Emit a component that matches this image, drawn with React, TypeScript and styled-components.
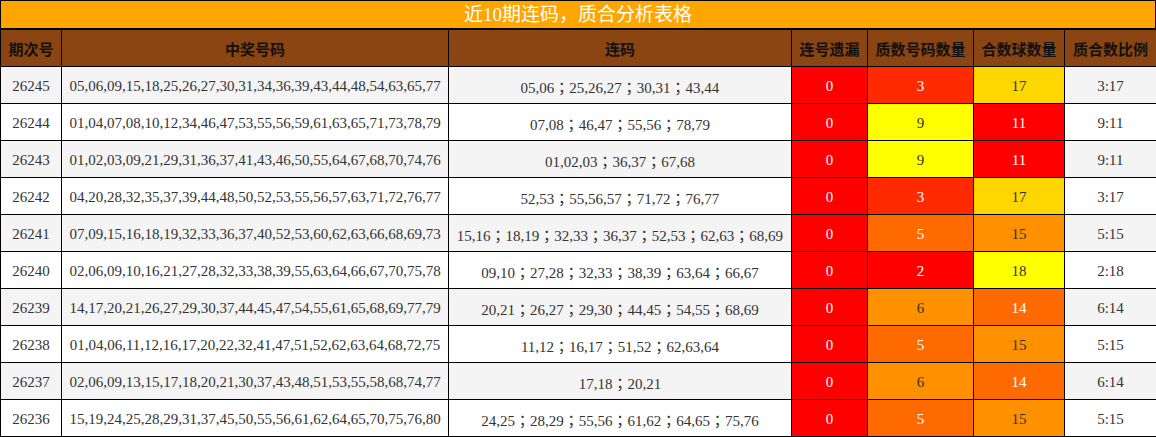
import React from "react"
import styled, { createGlobalStyle } from "styled-components"

const GlobalStyle = createGlobalStyle`
  html, body {
    margin: 0;
    padding: 0;
    background: #fff;
  }
`

const Wrap = styled.div`
  width: 1156px;
  font-family: "Liberation Serif", "Noto Sans CJK SC", serif;
`

const Title = styled.div`
  box-sizing: border-box;
  height: 29px;
  border: 1px solid #000;
  background: #ffa500;
  color: #fff;
  font-size: 19px;
  line-height: 27px;
  text-align: center;
`

const Table = styled.table`
  width: 1156px;
  border-collapse: collapse;
  table-layout: fixed;
`

const Col = styled.col<{ $w: number }>`
  width: ${(p) => p.$w}px;
`

const HeadCell = styled.th`
  height: 36px;
  padding: 0;
  border: 1px solid #000;
  background: #8b4513;
  color: #111;
  font-family: "Noto Sans CJK SC", sans-serif;
  font-size: 15px;
  font-weight: 700;
  text-align: center;
`

const Row = styled.tr<{ $alt: boolean }>`
  background: ${(p) => (p.$alt ? "#f4f4f4" : "#fff")};
`

const Cell = styled.td<{ $bg?: string; $light?: boolean }>`
  height: 34px;
  padding: 2px 0 0;
  border: 1px solid #000;
  text-align: center;
  font-size: 15px;
  color: ${(p) => (p.$light ? "#fff" : "#333")};
  background: ${(p) => p.$bg ?? "transparent"};
  white-space: nowrap;
`

// fullwidth semicolons sit centred in the TC face, as in the source page
const RunCell = styled(Cell)`
  font-family: "Liberation Serif", "Noto Sans CJK TC", serif;
`

const RED = "#ff0000"
const RED_ORANGE = "#ff2a00"
const DARK_ORANGE = "#ff6a00"
const ORANGE = "#ff9000"
const GOLD = "#ffd700"
const YELLOW = "#ffff00"

const tone: Record<number, [string, boolean]> = {
  0: [RED, true],
  2: [RED, true],
  3: [RED_ORANGE, true],
  5: [DARK_ORANGE, true],
  6: [ORANGE, false],
  9: [YELLOW, false],
  11: [RED, true],
  14: [DARK_ORANGE, true],
  15: [ORANGE, false],
  17: [GOLD, false],
  18: [YELLOW, false],
}

const rows = [
  ["26245", "05,06,09,15,18,25,26,27,30,31,34,36,39,43,44,48,54,63,65,77", "05,06；25,26,27；30,31；43,44", 0, 3, 17],
  ["26244", "01,04,07,08,10,12,34,46,47,53,55,56,59,61,63,65,71,73,78,79", "07,08；46,47；55,56；78,79", 0, 9, 11],
  ["26243", "01,02,03,09,21,29,31,36,37,41,43,46,50,55,64,67,68,70,74,76", "01,02,03；36,37；67,68", 0, 9, 11],
  ["26242", "04,20,28,32,35,37,39,44,48,50,52,53,55,56,57,63,71,72,76,77", "52,53；55,56,57；71,72；76,77", 0, 3, 17],
  ["26241", "07,09,15,16,18,19,32,33,36,37,40,52,53,60,62,63,66,68,69,73", "15,16；18,19；32,33；36,37；52,53；62,63；68,69", 0, 5, 15],
  ["26240", "02,06,09,10,16,21,27,28,32,33,38,39,55,63,64,66,67,70,75,78", "09,10；27,28；32,33；38,39；63,64；66,67", 0, 2, 18],
  ["26239", "14,17,20,21,26,27,29,30,37,44,45,47,54,55,61,65,68,69,77,79", "20,21；26,27；29,30；44,45；54,55；68,69", 0, 6, 14],
  ["26238", "01,04,06,11,12,16,17,20,22,32,41,47,51,52,62,63,64,68,72,75", "11,12；16,17；51,52；62,63,64", 0, 5, 15],
  ["26237", "02,06,09,13,15,17,18,20,21,30,37,43,48,51,53,55,58,68,74,77", "17,18；20,21", 0, 6, 14],
  ["26236", "15,19,24,25,28,29,31,37,45,50,55,56,61,62,64,65,70,75,76,80", "24,25；28,29；55,56；61,62；64,65；75,76", 0, 5, 15],
] as const

const widths = [61, 387, 343, 76, 106, 91, 92]
const heads = ["期次号", "中奖号码", "连码", "连号遗漏", "质数号码数量", "合数球数量", "质合数比例"]

const Scored = ({ n }: { n: number }) => {
  const [bg, light] = tone[n]
  return (
    <Cell $bg={bg} $light={light}>
      {n}
    </Cell>
  )
}

export default function App() {
  return (
    <Wrap>
      <GlobalStyle />
      <Title>近10期连码，质合分析表格</Title>
      <Table>
        <colgroup>
          {widths.map((w, i) => (
            <Col key={i} $w={w} />
          ))}
        </colgroup>
        <thead>
          <tr>
            {heads.map((h) => (
              <HeadCell key={h}>{h}</HeadCell>
            ))}
          </tr>
        </thead>
        <tbody>
          {rows.map(([issue, nums, runs, miss, prime, comp], i) => (
            <Row key={issue} $alt={i % 2 === 0}>
              <Cell>{issue}</Cell>
              <Cell>{nums}</Cell>
              <RunCell>{runs}</RunCell>
              <Scored n={miss} />
              <Scored n={prime} />
              <Scored n={comp} />
              <Cell>
                {prime}:{comp}
              </Cell>
            </Row>
          ))}
        </tbody>
      </Table>
    </Wrap>
  )
}
